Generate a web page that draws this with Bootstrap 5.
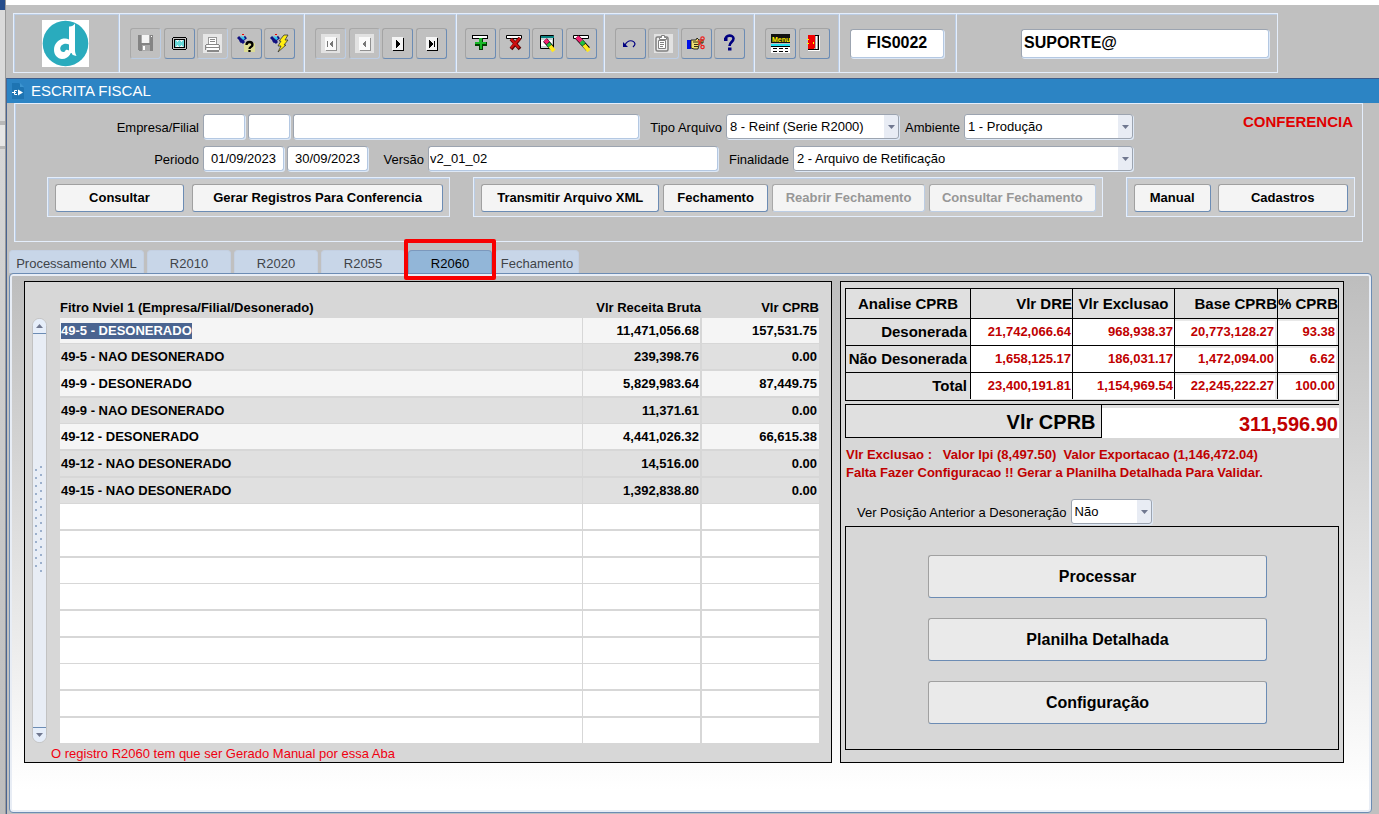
<!DOCTYPE html>
<html lang="pt-BR">
<head>
<meta charset="utf-8">
<meta name="viewport" content="width=device-width, initial-scale=1">
<title>Escrita Fiscal - FIS0022</title>
<link href="https://cdn.jsdelivr.net/npm/bootstrap@5.3.0/dist/css/bootstrap.min.css" rel="stylesheet">
<style>
:root{--line:#e4eefc;--line2:#bccde4;--steel:#6c8cb4;--face:#c0c0c0}
body{font-family:"Liberation Sans",Arial,sans-serif;font-size:13px;line-height:16px;color:#000;background:#fff}
button,input,select{font:inherit;color:inherit}
.edge-strip{width:6px;border-right:1px solid #999;background:linear-gradient(#274e8c 10px,#dadada 10px,#dadada 121px,#b8b8b8 121px,#b8b8b8 125px,#e6e6e6 125px,#e6e6e6 146px,#b8b8b8 146px,#b8b8b8 149px,#d6d6d6 149px,#bdbdbd)}
.app{background:var(--face);margin-top:5px}
/* toolbar */
.tool-strip{margin:8px 101px 5px 7px;border:1px solid var(--line);box-shadow:inset 0 1px var(--line2),inset 1px 0 var(--line2);height:60px}
.tool-group{border-right:1px solid var(--line);box-shadow:inset -1px 0 var(--line2);flex:none;padding:0 9px 0 10px}
.g-logo{width:106px;padding:0 12px 0 10px}.g-five{width:185px}.g-four{width:152px}.g-four-b{width:148px;padding:0 7px 0 8px}.g-four-c{width:150px}.g-two{width:85px}.g-code{width:117px;padding-right:12px}
.tool-btn{width:31px;height:31px;padding:0;background:var(--face);border:1px solid;border-color:#a4a4a4 var(--steel) var(--steel) #a4a4a4;border-radius:3px;display:flex;align-items:center;justify-content:center}
.tool-btn:disabled{border-color:#a8a8a8 var(--line2) var(--line2) #a8a8a8}
.tool-btn svg{width:19px;height:19px;display:block}
.fld{background:#fff;border:1px solid;border-color:#9ca4b0 #b4c8e2 #b4c8e2 #9ca4b0;border-radius:3px;height:25px;padding:0 1px 1px;min-width:0;outline:0;box-shadow:1px 1px #dde8f6}
.fld-big{height:29px;font-size:16px;font-weight:700;padding:0 2px}
/* window */
.win{border-left:1px solid #4a6490;border-top:1px solid #3c5c8c}
.win-title{background:#2c84c4;color:#fff;font-size:15px;height:24px;padding-left:5px;gap:7px}
.filter-box{margin:0 16px 0 7px;border:1px solid var(--line);box-shadow:inset 1px 0 var(--line2);padding:10px 7px 24px 0}
.form-rows{gap:7px}
.lab{text-align:right;padding-right:4px;white-space:nowrap;padding-top:2px;flex:none}
.pair-gap{gap:3px}
.w42{width:42px}.w82{width:81px}.l60{width:60px}.l65{width:65px}.l75{width:75px}.l87{width:87px}.l188{width:188px}
.s173{width:173px}.s169{width:169px}.s340{width:340px}.s81{width:81px}
.drop{appearance:none;padding:1px 18px 1px 3px;border-color:#9ca4b0;background:url("data:image/svg+xml,%3Csvg xmlns='http://www.w3.org/2000/svg' width='7' height='4'%3E%3Cpath d='M0 0h7L3.5 4z' fill='%23707890'/%3E%3C/svg%3E") right 3px center no-repeat,linear-gradient(#e8ecf4,#e8ecf4) right center/14px 100% no-repeat #fff}
.flag{width:222px;font-size:15px;font-weight:700;color:#e00000;text-align:right;padding:0 2px 0 0}
.btn-rows{display:grid;grid-template-columns:403fr 629fr 229fr;gap:23px;margin:6px 0 0 32px}
.btn-frame{display:grid;border:1px solid var(--line);box-shadow:inset 1px 1px var(--line2);background:#cacaca;padding:6px 6px 4px 7px}
.f1{grid-template-columns:128fr 250fr;gap:8px}.f2{grid-template-columns:178fr 105fr 153fr 167fr;gap:4px}.f3{grid-template-columns:77fr 131fr;gap:7px}
.cmd{height:28px;padding:0;font-weight:700;background:#f4f4f4;border:1px solid;border-color:#a0a0a0 var(--steel) var(--steel) #a0a0a0;border-radius:3px;white-space:nowrap}
.cmd:disabled{color:#979797;border-color:#a8a8a8 var(--line2) var(--line2) #a8a8a8}
/* tabs */
.tab-strip{gap:3px;margin:8px 0 0 2px}
.tab-btn{height:23px;width:84px;padding:3px 0 0;border:1px solid #c4d0e2;border-bottom:0;border-radius:4px 4px 0 0;background:#c8d6e8;color:#404448;white-space:nowrap;position:relative}
.tab-btn.first{width:135px}
.tab-btn.on{background:#92b6d8;border-color:#7c98bc;color:#000}
.tab-btn.on::after{content:"";position:absolute;inset:-12px -5px -7px;border:4px solid #f80000;border-radius:2px;z-index:2}
.sheet{margin:0 7px 2px 2px;border:1px solid var(--steel);border-radius:4px;box-shadow:inset 0 0 0 2px #e8edf5;background:linear-gradient(#bdbdbd,#fff 96%);padding:7px 27px 49px 14px}
.pair{display:grid;grid-template-columns:808fr 504fr;gap:8px}
.pane{border:1px solid #000;background:#d7d7d7;min-width:0}
/* record list */
.scroller{width:15px;margin:36px 13px 0 7px;border:1px solid #c2c2c2;border-radius:8px;background:#e8edf5;overflow:hidden;flex:none}
.scroller button{height:15px;padding:0;border:0;background:#e6eefa;display:flex;align-items:center;justify-content:center}
.scroller .up{border-bottom:1px solid var(--steel)}
.scroller .down{border-top:1px solid var(--steel)}
.grip{height:108px;margin-bottom:24px;background:radial-gradient(circle at 2px 2px,#9cb0cc 1px,transparent 1px) 1px 3px/5px 8px repeat-y,radial-gradient(circle at 2px 2px,#9cb0cc 1px,transparent 1px) 6px 0/5px 8px repeat-y;width:11px}
.recs{border-collapse:separate;border-spacing:0;table-layout:fixed;width:100%;font-weight:700}
.recs .c2{width:119px}.recs .c3{width:117px}
.recs th{height:36px;padding:0 0 2px;vertical-align:bottom;white-space:nowrap}
.recs td{height:27px;padding:0 2px 0 1px;border-bottom:2px solid #d7d7d7;background:#fff;white-space:nowrap}
.recs tbody tr:nth-child(3n+1) td{height:26px;border-bottom-width:1px}
.recs tbody tr:last-child td{height:25px;border-bottom:0}
.recs td:nth-child(1){border-right:1px solid #d7d7d7}
.recs td:nth-child(2){border-right:2px solid #d7d7d7;padding-right:1px}
.recs th:nth-child(2){padding-right:1px}
.recs .lt td{background:#f5f5f5}.recs .dk td{background:#e0e0e0}
.picked{background:#4a6490;color:#fff;display:inline-block}
.foot-note{color:#f00010;padding:4px 0 0 26px;line-height:14px}
/* analysis */
.side{padding:6px 4px 12px}
.ana-box{border:1px solid #000;background:#e0e0e0;padding-bottom:1px}
.ana{border-collapse:separate;border-spacing:0;table-layout:fixed;width:100%;font-weight:700}
.ana col.n{width:102px}.ana col.b{width:103px}.ana col.p{width:61px}
.ana th{font-size:15px;white-space:nowrap;padding:0;text-align:right}
.ana thead th{height:29px}
.ana tbody>tr>*{height:27px;border-top:1px solid #000}
.ana tr>*+*{border-left:1px solid #000}
.ana tbody th{padding-right:3px}
.ana td{background:#fff;color:#c00000;text-align:right;padding:0 1px}
.ana td:nth-child(n+4){box-shadow:inset -2px 2px #e8e8e8;padding-right:3px}
.total-row{display:grid;grid-template-columns:256fr 237fr;height:34px;margin-top:3px;border-top:1px solid #000;font-size:20px;font-weight:700;text-align:right;background:#e0e0e0}
.total-row .tl{border:solid #000;border-width:0 1px 1px;padding:9px 5px 0 0}
.total-row .tv{background:#fff;color:#c00000;margin-top:3px;padding:8px 1px 0 0}
.warn{color:#c00000;font-weight:700;line-height:18px;margin:8px 0 17px 1px;white-space:pre-wrap}
.act-box{border:1px solid #000;margin-top:2px;padding:28px 71px 25px 82px;gap:20px}
.act-box .cmd{height:43px;font-size:16px;background:#eaeaea}
</style>
</head>
<body>
<div class="d-flex min-vh-100">
<div class="edge-strip flex-shrink-0"></div>
<div class="app flex-grow-1 d-flex flex-column">
  <header class="tool-strip d-flex">
    <div class="tool-group g-logo d-flex align-items-center justify-content-center">
      <svg width="47" height="47" viewBox="0 0 47 47" role="img" aria-label="Logo"><path fill="#fff" d="M0 0h47v47H0z"/><circle cx="23.500" cy="23.500" r="22.800" fill="#2aabbd"/><path d="M27 6.500c2.500.3 4.500-1 6-3V30c0 2.500.5 4 1.500 6-3-.5-4.500-1.500-5.500-3-2 4-5.500 6-9 6-4.500-.3-8-4-8-9 0-6 4-10.500 9.500-11.500 2-.3 4 0 5.500 1z" fill="#fff"/><path d="M27 24.500c-3-1.800-8.500-.6-8.800 4 0 3.500 4 4.700 5 2.500.4-1.500 2.300-1.600 3.800-.5z" fill="#2aabbd"/><path d="M29.500 33c-1.500 3-2.500 4.500-4 5.500" fill="none" stroke="#2aabbd"/></svg>
    </div>
    <div class="tool-group g-five d-flex align-items-center justify-content-between">
      <button class="tool-btn" disabled aria-label="Salvar"><svg viewBox="0 0 19 19" shape-rendering="crispEdges"><path fill="#848484" d="M2 1h15v15l-1 1H3l-1-1z"/><path fill="#f4f4f4" d="M6 1h7v8H6z"/><path fill="#aaa" d="M5 1h1v8H5zM13 1h1v8h-1zM6 11h8v6H6z"/><path fill="#fff" d="M7 12h2v4H7zM15 2h1v1h-1z"/></svg></button>
      <button class="tool-btn" aria-label="Tela"><svg viewBox="0 0 19 19" shape-rendering="crispEdges"><path fill="#000" d="M3 3h13v1H3zM3 15h13v1H3zM2 4h1v11H2zM16 4h1v11h-1z"/><path d="M4.500 5.500h10v8h-10z" fill="#e8f4f4" stroke="#000"/><path d="M5 6h1v1h1v1h1V7h1V6h1v1h1v1h1V7h1V6h1v7h-1v-1h-1v-1h-1v1h-1v1H9v-1H8v-1H7v1H6v1H5z" fill="#68d8d8"/></svg></button>
      <button class="tool-btn" disabled aria-label="Imprimir"><svg viewBox="0 0 19 19" shape-rendering="crispEdges"><path fill="#e6e6e6" d="M0 0h19v19H0z"/><path fill="#fff" stroke="#999" d="M5.500 3.500h8v7h-8z"/><path fill="#888" d="M7 5h5v1H7zM7 7h5v1H7zM3 10h13v1H3zM2 11h1v5H2zM16 11h1v5h-1zM3 13h13v1H3zM4 16h12v2H4z"/><path fill="#fff" d="M4 11h11v2H4zM4 14h12v2H4z"/></svg></button>
      <button class="tool-btn" aria-label="Entrar consulta"><svg viewBox="0 0 19 19"><path fill="#ffff60" d="M7 9h11v9H7z" opacity=".45"/><path d="M1 3l6 6M3 8l6-5" stroke="#101080" stroke-width="3"/><path d="M3 2l4 1 1 2-2 1z" fill="#30c8f0"/><path d="M5 0h2v1H5z" fill="#e00"/><path d="M9.500 11c0-4 6-4 6 0 0 2-3 1.500-3 4M12.500 16v2" fill="none" stroke="#000" stroke-width="2.300"/></svg></button>
      <button class="tool-btn" aria-label="Executar consulta"><svg viewBox="0 0 19 19"><path d="M1 3l6 6M3 8l6-5" stroke="#101080" stroke-width="3"/><path d="M3 2l4 1 1 2-2 1z" fill="#30c8f0"/><path d="M5 0h2v1H5z" fill="#e00"/><path d="M14 1h4l-3 5h3l-4 5h2l-8 7 3-6H8l3-5H9z" fill="#ffee10" stroke="#333" stroke-width=".8"/></svg></button>
    </div>
    <div class="tool-group g-four d-flex align-items-center justify-content-between">
      <button class="tool-btn" disabled aria-label="Primeiro"><svg viewBox="0 0 19 19" shape-rendering="crispEdges"><path fill="#e2e2e2" d="M0 0h19v19H0z"/><path fill="#909090" d="M5 4h11v13H5z"/><path fill="#fafafa" d="M4 3h11v13H4z"/><path fill="#777" d="M6 7h1v6H6zM12 6v8L8 10z"/></svg></button>
      <button class="tool-btn" disabled aria-label="Anterior"><svg viewBox="0 0 19 19" shape-rendering="crispEdges"><path fill="#e2e2e2" d="M0 0h19v19H0z"/><path fill="#909090" d="M5 4h11v13H5z"/><path fill="#fafafa" d="M4 3h11v13H4z"/><path fill="#777" d="M11 6v8l-4-4z"/></svg></button>
      <button class="tool-btn" aria-label="Próximo"><svg viewBox="0 0 19 19" shape-rendering="crispEdges"><path fill="#000" d="M5 4h11v13H5z"/><path fill="#f4f4f4" d="M4 3h11v13H4z"/><path d="M8 6v8l4-4z"/></svg></button>
      <button class="tool-btn" aria-label="Último"><svg viewBox="0 0 19 19" shape-rendering="crispEdges"><path fill="#000" d="M5 4h11v13H5z"/><path fill="#f4f4f4" d="M4 3h11v13H4z"/><path d="M7 6v8l4-4zM12 7h1v6h-1z"/></svg></button>
    </div>
    <div class="tool-group g-four-b d-flex align-items-center justify-content-between">
      <button class="tool-btn" aria-label="Inserir"><svg viewBox="0 0 19 19" shape-rendering="crispEdges"><path fill="#fff" stroke="#000" d="M1.500 1.500h15v3h-15z"/><path fill="#034003" d="M8 4h4v4h4v4h-4v4H8v-4H4V8h4z"/><path fill="#18b828" d="M8 4h3v4h4v2h-4v5H9v-5H4V8h4z"/></svg></button>
      <button class="tool-btn" aria-label="Excluir"><svg viewBox="0 0 19 19"><path fill="#fff" stroke="#000" d="M1.500 1.500h15v3h-15z"/><path d="M6 5l9 10M15 4L6 15" stroke="#500" stroke-width="3.600"/><path d="M6 5l8 9M15 4L6 14" stroke="#d01010" stroke-width="2.200"/></svg></button>
      <button class="tool-btn" aria-label="Limpar bloco"><svg viewBox="0 0 19 19"><path fill="#c8d4d4" stroke="#000" d="M2.500 1.500h13v13h-13z"/><path fill="#0a8080" d="M3 2h13v2H3z"/><path fill="#fff" d="M3 6h11v6H3z"/><path d="M7 6l7 8" stroke="#000" stroke-width="5"/><path d="M7 6l3 3" stroke="#f02070" stroke-width="4"/><path d="M10 9.500l2 2.500" stroke="#20c040" stroke-width="4"/><path d="M12 12l4 5" stroke="#ffe820" stroke-width="4"/></svg></button>
      <button class="tool-btn" aria-label="Limpar registro"><svg viewBox="0 0 19 19"><path fill="#fff" stroke="#000" d="M1.500 1.500h15v3h-15z"/><path d="M5 3l11 12" stroke="#000" stroke-width="5"/><path d="M5 3l5 5" stroke="#f02070" stroke-width="4"/><path d="M9 7.500l3 3" stroke="#20c040" stroke-width="4"/><path d="M12 11l5 6" stroke="#ffe820" stroke-width="4"/></svg></button>
    </div>
    <div class="tool-group g-four-c d-flex align-items-center justify-content-between">
      <button class="tool-btn" aria-label="Desfazer"><svg viewBox="0 0 19 19"><path d="M4 11c3-6 9-5 10-1 0 1-1 2-2 3" fill="none" stroke="#000080" stroke-width="1.200"/><path d="M2 8v5h5z" fill="#000080"/></svg></button>
      <button class="tool-btn" disabled aria-label="Colar"><svg viewBox="0 0 19 19"><path fill="#e2e2e2" d="M0 0h19v19H0z"/><rect x="2" y="3" width="12" height="14" rx="1.500" fill="#eee" stroke="#808080" stroke-width="1.500"/><path d="M5.500 5.500v-2h2v-2h3v2h2v2zM4.500 6.500h7v8h-7z" fill="#fff" stroke="#808080"/><path d="M6 8.500h4M6 10.500h4M6 12.500h3" stroke="#808080"/></svg></button>
      <button class="tool-btn" aria-label="Recortar"><svg viewBox="0 0 19 19"><path fill="#0010e8" d="M0 6h4v9H0z"/><path fill="#f0e070" stroke="#000" stroke-width=".8" d="M4 6h5l1-2 2 2h4v3h-4v2l-1 4H7l-3-1z"/><path d="M6 8h9M7 10.500h5M7 12.500h4" stroke="#000" stroke-width=".8"/><g fill="none" stroke="#f02020" stroke-width="1.200"><circle cx="15.500" cy="4.500" r="1.700"/><circle cx="15.500" cy="13" r="1.700"/><path d="M15 6l-4 5M15 12l-4-6"/></g></svg></button>
      <button class="tool-btn" aria-label="Ajuda"><svg viewBox="0 0 19 19"><path d="M5.500 5.500C5 .5 13.500.5 13.500 4.500 13.500 8 9.500 8 9.500 12" fill="none" stroke="#000080" stroke-width="2.600"/><path fill="#000080" d="M8 13.500h3.500v3H8zM4 4h3.500v3H4z"/></svg></button>
    </div>
    <div class="tool-group g-two d-flex align-items-center justify-content-between">
      <button class="tool-btn" aria-label="Menu"><svg viewBox="0 0 19 19"><path fill="#111" d="M0 0h19v9H0z"/><text x="1" y="8" font-size="7" font-weight="700" fill="#fff000" font-family="Liberation Sans,sans-serif">Menu</text><path fill="#20e0f0" d="M0 10h19v2H0z"/><path fill="#fff" d="M0 12h19v7H0z"/><path d="M0 12.500h19M2 14.500h4M8 14.500h4M14 14.500h3M2 17.500h4M8 17.500h4M14 17.500h3" stroke="#000"/></svg></button>
      <button class="tool-btn" aria-label="Sair"><svg viewBox="0 0 19 19" shape-rendering="crispEdges"><path fill="#aaa" stroke="#000" d="M3.500 1.500h10v14h-10z"/><path fill="#fff" d="M11 2h1v13h-1zM14 2h1v15H3v-1h11z"/><path fill="#f00000" d="M3 1h7v12l-2 2H3z"/><path fill="#ff0" d="M2 5h2v1H2zM2 9h2v1H2zM8 8h1v2H8z"/></svg></button>
    </div>
    <div class="tool-group g-code d-flex align-items-center">
      <input class="fld fld-big w-100 text-center" aria-label="Código do programa" value="FIS0022">
    </div>
    <div class="flex-grow-1 d-flex align-items-center ps-5 pe-2">
      <input class="fld fld-big flex-grow-1 ms-3" aria-label="Usuário" value="SUPORTE@">
    </div>
  </header>

  <main class="win flex-grow-1 d-flex flex-column">
    <div class="win-title d-flex align-items-center">
      <svg width="12" height="16" viewBox="0 0 12 16" aria-hidden="true"><path d="M0 0h7l5 5v11H0z" fill="#1e74b2"/><path d="M8 0l4 4H8z" fill="#3c94d0"/><path d="M5 7.500H2.500v4H5M0 9.500h4" stroke="#fff" fill="none"/><path d="M6 6.500l5 3-5 3z" fill="#fff"/></svg>
      <span>ESCRITA FISCAL</span>
    </div>

    <form class="filter-box" onsubmit="return false">
      <div class="d-flex">
        <div class="form-rows flex-grow-1 d-flex flex-column">
          <div class="d-flex align-items-center">
            <label class="lab l188" for="emp">Empresa/Filial</label>
            <div class="d-flex flex-grow-1 pair-gap">
              <input id="emp" class="fld w42"><input class="fld w42" aria-label="Filial"><input class="fld flex-grow-1" aria-label="Nome da empresa">
            </div>
            <label class="lab l87" for="tipo">Tipo Arquivo</label>
            <select id="tipo" class="fld drop s173"><option>8 - Reinf (Serie R2000)</option></select>
            <label class="lab l65" for="amb">Ambiente</label>
            <select id="amb" class="fld drop s169"><option>1 - Produção</option></select>
          </div>
          <div class="d-flex align-items-center">
            <label class="lab l188" for="ini">Periodo</label>
            <div class="d-flex pair-gap">
              <input id="ini" class="fld w82 text-center" value="01/09/2023"><input class="fld w82 text-center" aria-label="Fim do período" value="30/09/2023">
            </div>
            <label class="lab l60" for="ver">Versão</label>
            <input id="ver" class="fld flex-grow-1" value="v2_01_02">
            <label class="lab l75" for="fin">Finalidade</label>
            <select id="fin" class="fld drop s340"><option>2 - Arquivo de Retificação</option></select>
          </div>
        </div>
        <div class="flag">CONFERENCIA</div>
      </div>
      <div class="btn-rows">
        <div class="btn-frame f1"><button class="cmd">Consultar</button><button class="cmd">Gerar Registros Para Conferencia</button></div>
        <div class="btn-frame f2"><button class="cmd">Transmitir Arquivo XML</button><button class="cmd">Fechamento</button><button class="cmd" disabled>Reabrir Fechamento</button><button class="cmd" disabled>Consultar Fechamento</button></div>
        <div class="btn-frame f3"><button class="cmd">Manual</button><button class="cmd">Cadastros</button></div>
      </div>
    </form>

    <div class="tab-strip d-flex" role="tablist">
      <button class="tab-btn first" role="tab">Processamento XML</button>
      <button class="tab-btn" role="tab">R2010</button>
      <button class="tab-btn" role="tab">R2020</button>
      <button class="tab-btn" role="tab">R2055</button>
      <button class="tab-btn on" role="tab" aria-selected="true">R2060</button>
      <button class="tab-btn" role="tab">Fechamento</button>
    </div>

    <div class="sheet flex-grow-1">
      <div class="pair">
        <section class="pane">
          <div class="d-flex pe-2">
            <div class="scroller d-flex flex-column justify-content-between">
              <button class="up" aria-label="Subir"><svg width="7" height="4"><path d="M0 4h7L3.500 0z" fill="#707890"/></svg></button>
              <div class="grip"></div>
              <button class="down" aria-label="Descer"><svg width="7" height="4"><path d="M0 0h7L3.500 4z" fill="#707890"/></svg></button>
            </div>
            <div class="flex-grow-1 me-1">
            <table class="recs">
              <colgroup><col><col class="c2"><col class="c3"></colgroup>
              <thead><tr><th>Fitro Nviel 1 (Empresa/Filial/Desonerado)</th><th class="text-end">Vlr Receita Bruta</th><th class="text-end">Vlr CPRB</th></tr></thead>
              <tbody>
                <tr class="lt"><td><span class="picked">49-5 - DESONERADO</span></td><td class="text-end">11,471,056.68</td><td class="text-end">157,531.75</td></tr>
                <tr class="dk"><td>49-5 - NAO DESONERADO</td><td class="text-end">239,398.76</td><td class="text-end">0.00</td></tr>
                <tr class="lt"><td>49-9 - DESONERADO</td><td class="text-end">5,829,983.64</td><td class="text-end">87,449.75</td></tr>
                <tr class="dk"><td>49-9 - NAO DESONERADO</td><td class="text-end">11,371.61</td><td class="text-end">0.00</td></tr>
                <tr class="lt"><td>49-12 - DESONERADO</td><td class="text-end">4,441,026.32</td><td class="text-end">66,615.38</td></tr>
                <tr class="dk"><td>49-12 - NAO DESONERADO</td><td class="text-end">14,516.00</td><td class="text-end">0.00</td></tr>
                <tr class="dk"><td>49-15 - NAO DESONERADO</td><td class="text-end">1,392,838.80</td><td class="text-end">0.00</td></tr>
                <tr><td></td><td></td><td></td></tr>
                <tr><td></td><td></td><td></td></tr>
                <tr><td></td><td></td><td></td></tr>
                <tr><td></td><td></td><td></td></tr>
                <tr><td></td><td></td><td></td></tr>
                <tr><td></td><td></td><td></td></tr>
                <tr><td></td><td></td><td></td></tr>
                <tr><td></td><td></td><td></td></tr>
                <tr><td></td><td></td><td></td></tr>
              </tbody>
            </table>
            </div>
          </div>
          <div class="foot-note">O registro R2060 tem que ser Gerado Manual por essa Aba</div>
        </section>

        <section class="pane side">
          <div class="ana-box">
            <table class="ana">
              <colgroup><col><col class="n"><col class="n"><col class="b"><col class="p"></colgroup>
              <thead><tr><th class="text-center">Analise CPRB</th><th>Vlr DRE</th><th class="text-center">Vlr Exclusao</th><th>Base CPRB</th><th>% CPRB</th></tr></thead>
              <tbody>
                <tr><th>Desonerada</th><td>21,742,066.64</td><td>968,938.37</td><td>20,773,128.27</td><td>93.38</td></tr>
                <tr><th>Não Desonerada</th><td>1,658,125.17</td><td>186,031.17</td><td>1,472,094.00</td><td>6.62</td></tr>
                <tr><th>Total</th><td>23,400,191.81</td><td>1,154,969.54</td><td>22,245,222.27</td><td>100.00</td></tr>
              </tbody>
            </table>
          </div>
          <div class="total-row"><div class="tl">Vlr CPRB</div><div class="tv">311,596.90</div></div>
          <div class="warn">Vlr Exclusao :   Valor Ipi (8,497.50)  Valor Exportacao (1,146,472.04)
Falta Fazer Configuracao !! Gerar a Planilha Detalhada Para Validar.</div>
          <div class="d-flex align-items-center ms-2">
            <label class="lab ps-1" for="pos">Ver Posição Anterior a Desoneração</label>
            <select id="pos" class="fld drop s81"><option>Não</option></select>
          </div>
          <div class="act-box d-flex flex-column">
            <button class="cmd">Processar</button>
            <button class="cmd">Planilha Detalhada</button>
            <button class="cmd">Configuração</button>
          </div>
        </section>
      </div>
    </div>
  </main>
</div>
</div>
<script src="https://cdn.jsdelivr.net/npm/bootstrap@5.3.0/dist/js/bootstrap.bundle.min.js"></script>
</body>
</html>
